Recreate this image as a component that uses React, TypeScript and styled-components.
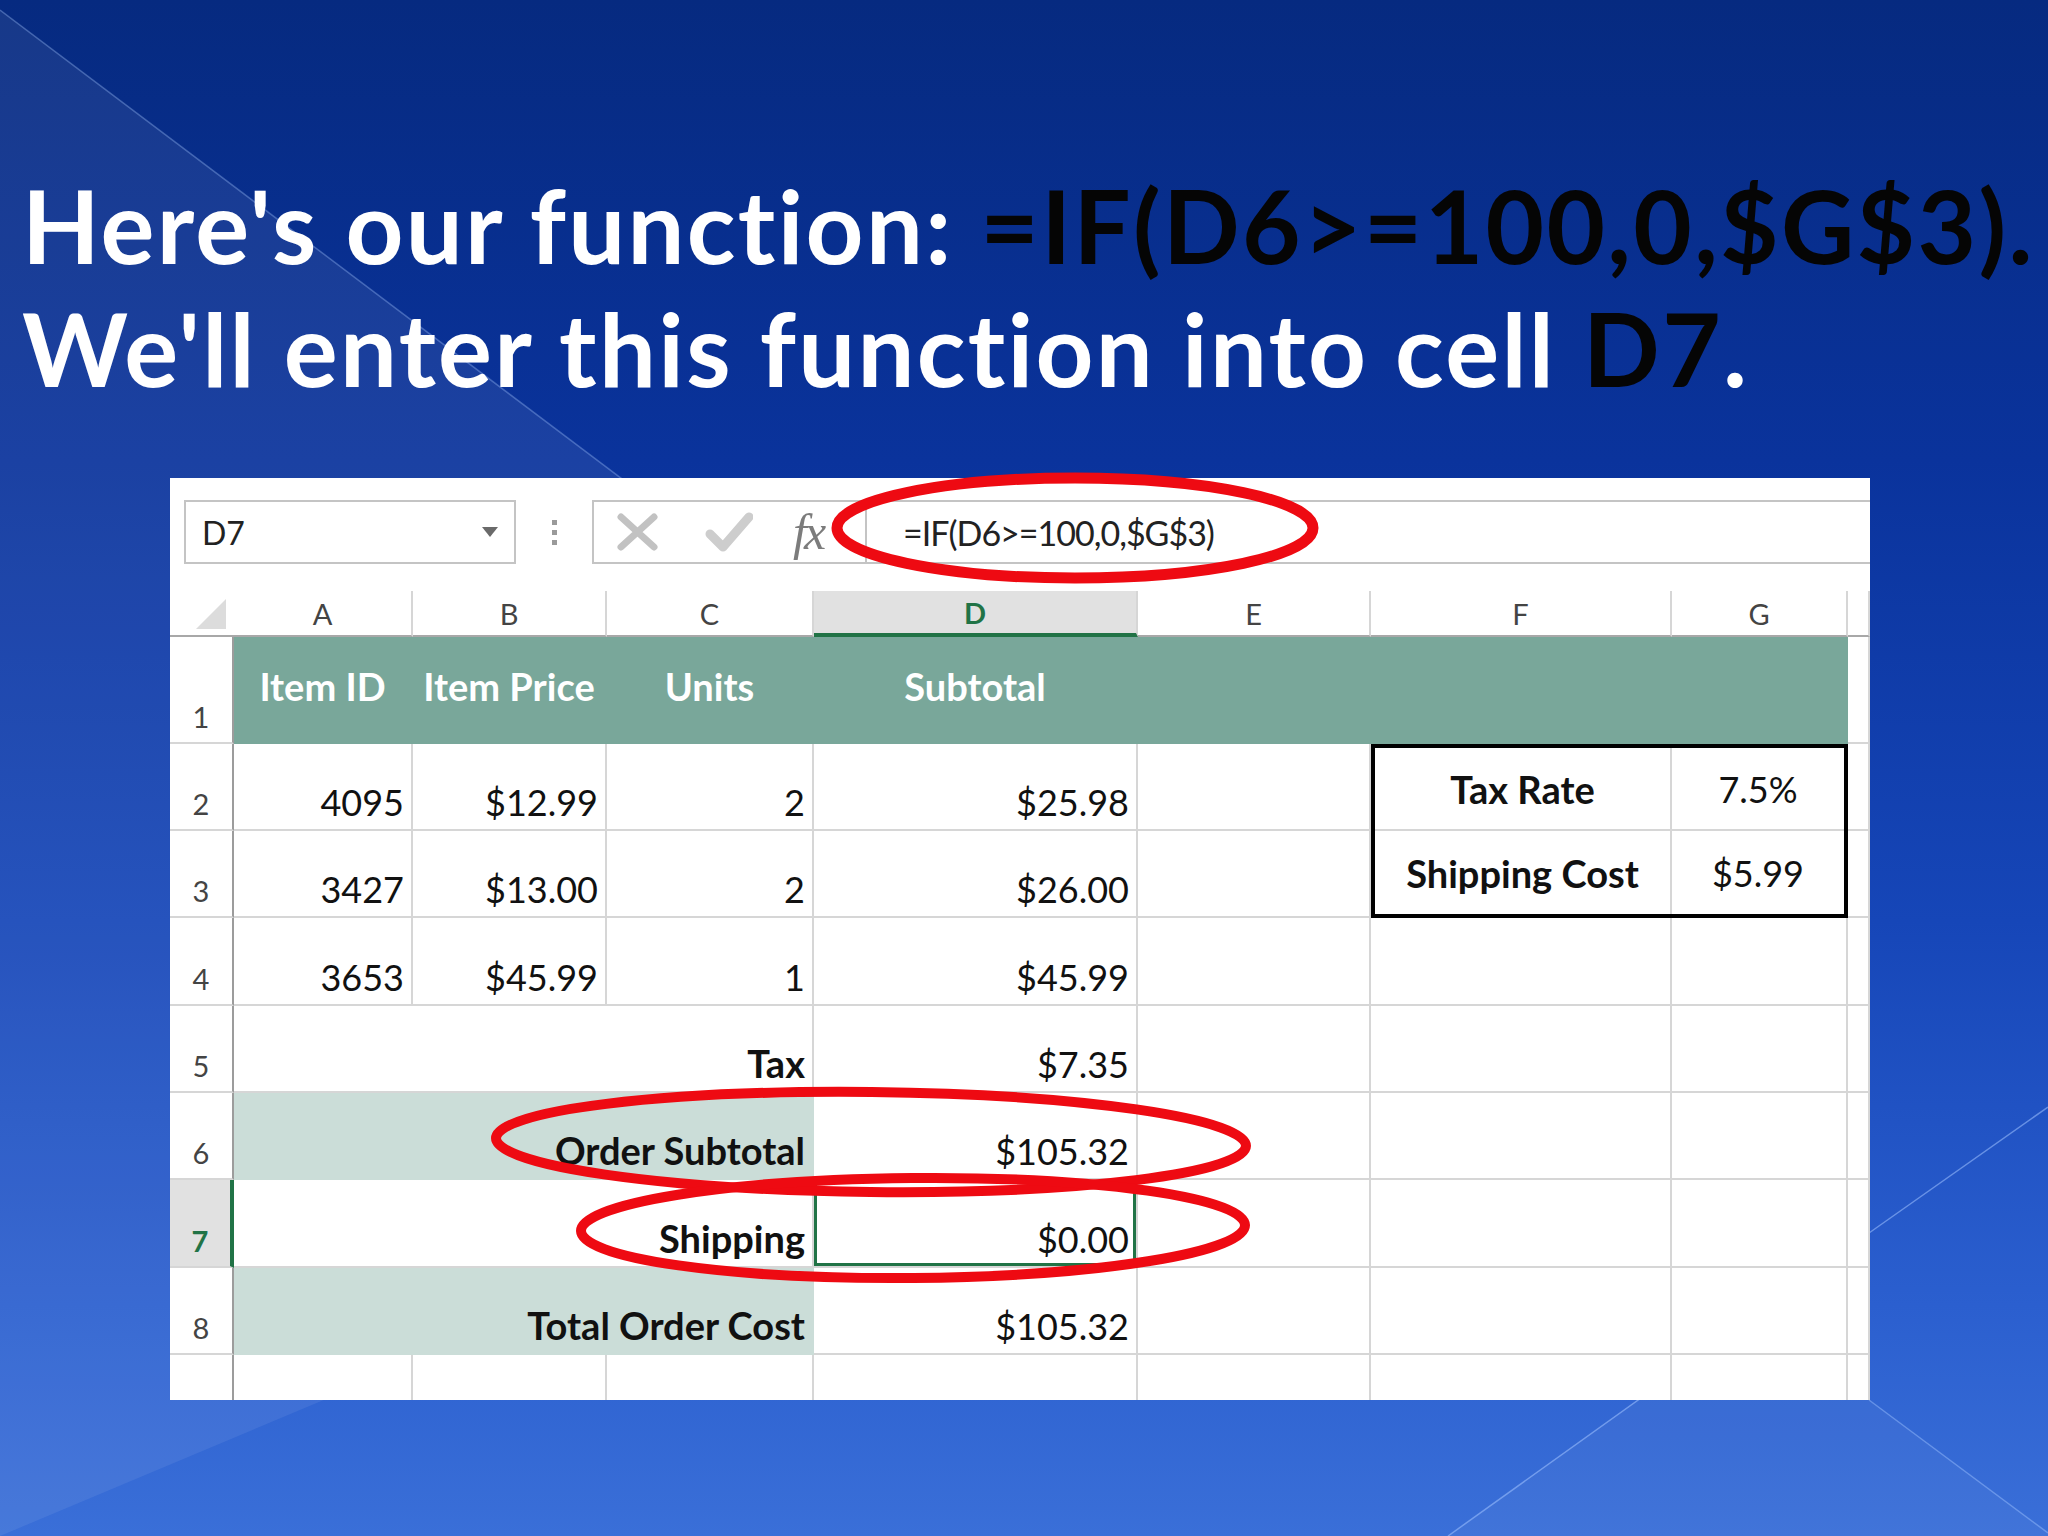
import React from "react";
import styled, { createGlobalStyle, css } from "styled-components";

const GlobalStyle = createGlobalStyle`
  html, body {
    margin: 0;
    padding: 0;
  }
  body {
    background: #0b3394;
  }
`;

const Slide = styled.div`
  position: relative;
  width: 2048px;
  height: 1536px;
  overflow: hidden;
  background: linear-gradient(180deg, #062a80 0%, #0a339c 30%, #1646b8 60%, #2b5fcf 85%, #3a6fd8 100%);
`;

const Decor = styled.svg`
  position: absolute;
  left: 0;
  top: 0;
  width: 2048px;
  height: 1536px;
`;

const Content = styled.div`
  position: relative;
  padding: 164px 0 0 22px;
`;

const Title = styled.h1`
  margin: 0;
  font-family: Lato, "Liberation Sans", sans-serif;
  font-weight: 700;
  font-size: 101px;
  line-height: 123px;
  letter-spacing: 2.3px;
  font-variant-ligatures: none;
  color: #ffffff;
  white-space: nowrap;
`;

const Dark = styled.span`
  color: #050505;
`;

const Sheet = styled.div`
  position: relative;
  margin: 68px 0 0 148px;
  width: 1700px;
  height: 922px;
  background: #ffffff;
  font-family: Lato, "Liberation Sans", sans-serif;
`;

const SheetClip = styled.div`
  width: 100%;
  height: 100%;
  overflow: hidden;
`;

const Toolbar = styled.div`
  box-sizing: border-box;
  height: 110px;
  display: flex;
  align-items: flex-start;
  padding: 22px 0 0 14px;
`;

const NameBox = styled.div`
  box-sizing: border-box;
  width: 332px;
  height: 64px;
  border: 2px solid #c4c4c4;
  display: flex;
  align-items: center;
  justify-content: space-between;
  padding: 0 16px;
  font-size: 32px;
  color: #222;
`;

const DropArrow = styled.span`
  width: 0;
  height: 0;
  border-left: 8px solid transparent;
  border-right: 8px solid transparent;
  border-top: 10px solid #6a6a6a;
`;

const Grip = styled.div`
  width: 76px;
  height: 64px;
  display: flex;
  flex-direction: column;
  align-items: center;
  justify-content: center;
  gap: 5px;
`;

const GripDot = styled.span`
  width: 5px;
  height: 5px;
  background: #9a9a9a;
`;

const FormulaBox = styled.div`
  box-sizing: border-box;
  flex: 1;
  height: 64px;
  border: 2px solid #c4c4c4;
  border-right: none;
  display: flex;
  align-items: center;
  padding-left: 23px;
`;

const BarIcon = styled.svg<{ $gap: number }>`
  flex: none;
  margin-right: ${(p) => p.$gap}px;
`;

const Fx = styled.span`
  width: 40px;
  font-family: "Liberation Serif", "DejaVu Serif", serif;
  font-style: italic;
  font-size: 50px;
  line-height: 1;
  color: #7c7c7c;
  letter-spacing: -3px;
`;

const BarDivider = styled.span`
  width: 2px;
  align-self: stretch;
  background: #c4c4c4;
  margin: 0 36px 0 32px;
`;

const FormulaText = styled.span`
  font-size: 34px;
  letter-spacing: -1px;
  color: #222;
  white-space: nowrap;
`;

const Grid = styled.div`
  display: grid;
  grid-template-columns: 64px 179px 194px 207px 324px 233px 301px 176px 22px;
  grid-template-rows: 49px 107px 87px 87px 88px 87px 87px 88px 87px 87px;
`;

const Corner = styled.div`
  box-sizing: border-box;
  border-bottom: 2px solid #a8a8a8;
  display: flex;
  align-items: flex-end;
  justify-content: flex-end;
  padding: 0 8px 6px 0;

  &::after {
    content: "";
    width: 30px;
    height: 30px;
    background: #dcdcdc;
    clip-path: polygon(100% 0, 100% 100%, 0 100%);
  }
`;

const ColHead = styled.div<{ $active?: boolean }>`
  box-sizing: border-box;
  display: flex;
  align-items: center;
  justify-content: center;
  font-size: 29px;
  color: #444;
  border-right: 2px solid #d6d6d6;
  border-bottom: 2px solid #a8a8a8;
  margin-top: 3px;
  ${(p) =>
    p.$active &&
    css`
      background: #e1e1e1;
      color: #217346;
      font-weight: 700;
      border-bottom: 4px solid #217346;
    `}
`;

const RowHead = styled.div<{ $active?: boolean }>`
  box-sizing: border-box;
  display: flex;
  align-items: flex-end;
  justify-content: center;
  padding-bottom: 8px;
  font-size: 29px;
  color: #444;
  border-right: 2px solid #9c9c9c;
  border-bottom: 2px solid #d6d6d6;
  ${(p) =>
    p.$active &&
    css`
      background: #e1e1e1;
      color: #217346;
      font-weight: 700;
      border-right: 4px solid #217346;
    `}
`;

const Cell = styled.div<{
  $align?: "left" | "center" | "right";
  $fill?: string;
  $bold?: boolean;
  $span?: number;
  $middle?: boolean;
  $selected?: boolean;
}>`
  box-sizing: border-box;
  display: flex;
  align-items: ${(p) => (p.$middle ? "center" : "flex-end")};
  justify-content: ${(p) =>
    p.$align === "right" ? "flex-end" : p.$align === "center" ? "center" : "flex-start"};
  padding: 0 7px 5px;
  background: ${(p) => p.$fill || "#ffffff"};
  border-right: 2px solid ${(p) => p.$fill || "#d6d6d6"};
  border-bottom: 2px solid ${(p) => p.$fill || "#d6d6d6"};
  grid-column: ${(p) => (p.$span ? `span ${p.$span}` : "auto")};
  font-size: ${(p) => (p.$bold ? 38 : 36)}px;
  font-weight: ${(p) => (p.$bold ? 700 : 400)};
  color: #111;
  white-space: nowrap;
  ${(p) =>
    p.$selected &&
    css`
      box-shadow: inset 0 0 0 3px #217346;
    `}
`;

const HeadCell = styled(Cell)`
  color: #ffffff;
  padding-bottom: 8px;
`;

const TaxBox = styled.div`
  box-sizing: border-box;
  grid-column: span 2;
  grid-row: span 2;
  border: 4px solid #000;
  display: grid;
  grid-template-columns: 297px 1fr;
  grid-template-rows: 83px 1fr;
`;

const TaxCell = styled.div<{ $bold?: boolean; $right?: boolean; $bottom?: boolean }>`
  display: flex;
  align-items: center;
  justify-content: center;
  font-size: ${(p) => (p.$bold ? 38 : 36)}px;
  font-weight: ${(p) => (p.$bold ? 700 : 400)};
  color: #111;
  border-right: ${(p) => (p.$right ? "2px solid #d6d6d6" : "none")};
  border-bottom: ${(p) => (p.$bottom ? "2px solid #d6d6d6" : "none")};
  white-space: nowrap;
`;

const Marks = styled.svg`
  position: absolute;
  left: 0;
  top: 0;
  width: 1700px;
  height: 922px;
  overflow: visible;
  pointer-events: none;
`;

const GREEN = "#79a79a";
const PALE = "#cbddd8";

const columns = ["A", "B", "C", "D", "E", "F", "G", ""];

const items = [
  { id: "4095", price: "$12.99", units: "2", sub: "$25.98" },
  { id: "3427", price: "$13.00", units: "2", sub: "$26.00" },
  { id: "3653", price: "$45.99", units: "1", sub: "$45.99" },
];

const totals = [
  { row: 5, label: "Tax", value: "$7.35", fill: undefined },
  { row: 6, label: "Order Subtotal", value: "$105.32", fill: PALE },
  { row: 7, label: "Shipping", value: "$0.00", fill: undefined },
  { row: 8, label: "Total Order Cost", value: "$105.32", fill: PALE },
];

const App: React.FC = () => {
  return (
    <>
      <GlobalStyle />
      <Slide>
        <Decor viewBox="0 0 2048 1536">
          <polygon points="0,10 1300,990 0,1536" fill="rgba(255,255,255,0.07)" />
          <line x1="0" y1="10" x2="1300" y2="990" stroke="rgba(170,200,255,0.35)" strokeWidth="1.5" />
          <polygon points="1448,1536 1637,1400 1869,1400 2048,1533 2048,1536" fill="rgba(255,255,255,0.04)" />
          <line x1="1448" y1="1536" x2="1820" y2="1270" stroke="rgba(160,195,255,0.55)" strokeWidth="1.5" />
          <line x1="1869" y1="1400" x2="2048" y2="1533" stroke="rgba(160,195,255,0.45)" strokeWidth="1.5" />
          <line x1="1869" y1="1233" x2="2048" y2="1107" stroke="rgba(160,195,255,0.55)" strokeWidth="1.5" />
        </Decor>
        <Content>
          <Title>
            Here's our function: <Dark>=IF(D6&gt;=100,0,$G$3).</Dark>
            <br />
            We'll enter this function into cell <Dark>D7</Dark>.
          </Title>

          <Sheet>
            <SheetClip>
              <Toolbar>
                <NameBox>
                  D7
                  <DropArrow />
                </NameBox>
                <Grip>
                  <GripDot />
                  <GripDot />
                  <GripDot />
                </Grip>
                <FormulaBox>
                  <BarIcon $gap={47} width="41" height="38" viewBox="0 0 41 38">
                    <path d="M4 4 L37 34 M37 4 L4 34" stroke="#c2c2c2" strokeWidth="7" strokeLinecap="round" fill="none" />
                  </BarIcon>
                  <BarIcon $gap={40} width="48" height="40" viewBox="0 0 48 40">
                    <path d="M5 22 L18 35 L44 5" stroke="#cdcdcd" strokeWidth="9" strokeLinecap="round" strokeLinejoin="round" fill="none" />
                  </BarIcon>
                  <Fx>fx</Fx>
                  <BarDivider />
                  <FormulaText>=IF(D6&gt;=100,0,$G$3)</FormulaText>
                </FormulaBox>
              </Toolbar>

              <Grid>
                <Corner />
                {columns.map((c, i) => (
                  <ColHead key={i} $active={c === "D"}>
                    {c}
                  </ColHead>
                ))}

                <RowHead>1</RowHead>
                <HeadCell $fill={GREEN} $bold $middle $align="center">Item ID</HeadCell>
                <HeadCell $fill={GREEN} $bold $middle $align="center">Item Price</HeadCell>
                <HeadCell $fill={GREEN} $bold $middle $align="center">Units</HeadCell>
                <HeadCell $fill={GREEN} $bold $middle $align="center">Subtotal</HeadCell>
                <HeadCell $fill={GREEN} />
                <HeadCell $fill={GREEN} />
                <HeadCell $fill={GREEN} />
                <Cell />

                {items.map((it, i) => (
                  <React.Fragment key={it.id}>
                    <RowHead>{i + 2}</RowHead>
                    <Cell $align="right">{it.id}</Cell>
                    <Cell $align="right">{it.price}</Cell>
                    <Cell $align="right">{it.units}</Cell>
                    <Cell $align="right">{it.sub}</Cell>
                    <Cell />
                    {i === 0 && (
                      <TaxBox>
                        <TaxCell $bold $right $bottom>Tax Rate</TaxCell>
                        <TaxCell $bottom>7.5%</TaxCell>
                        <TaxCell $bold $right>Shipping Cost</TaxCell>
                        <TaxCell>$5.99</TaxCell>
                      </TaxBox>
                    )}
                    {i === 2 && (
                      <>
                        <Cell />
                        <Cell />
                      </>
                    )}
                    <Cell />
                  </React.Fragment>
                ))}

                {totals.map((t) => (
                  <React.Fragment key={t.row}>
                    <RowHead $active={t.row === 7}>{t.row}</RowHead>
                    <Cell $span={3} $align="right" $bold $fill={t.fill}>
                      {t.label}
                    </Cell>
                    <Cell $align="right" $selected={t.row === 7}>
                      {t.value}
                    </Cell>
                    <Cell />
                    <Cell />
                    <Cell />
                    <Cell />
                  </React.Fragment>
                ))}

                {/* row 9 is cut off by the panel edge, its number is not visible */}
                <RowHead />
                {columns.map((c, i) => (
                  <Cell key={i} />
                ))}
              </Grid>
            </SheetClip>

            <Marks viewBox="0 0 1700 922">
              <ellipse cx="905" cy="50" rx="238" ry="50" fill="none" stroke="#ee0a12" strokeWidth="11" />
              <ellipse cx="701" cy="664" rx="375" ry="50" fill="none" stroke="#ee0a12" strokeWidth="10" transform="rotate(0.6 701 664)" />
              <ellipse cx="743" cy="750" rx="332" ry="50" fill="none" stroke="#ee0a12" strokeWidth="10" transform="rotate(-0.5 743 750)" />
            </Marks>
          </Sheet>
        </Content>
      </Slide>
    </>
  );
};

export default App;
